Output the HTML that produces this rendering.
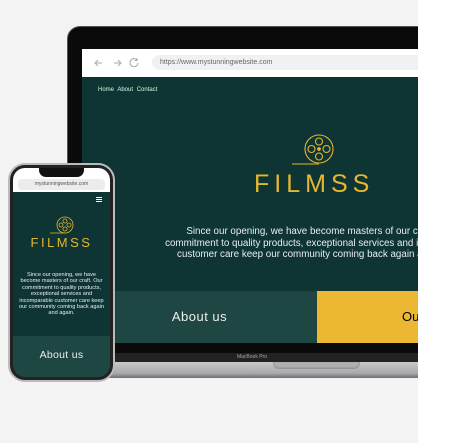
<!DOCTYPE html>
<html><head><style>
*{margin:0;padding:0;box-sizing:border-box}
body{width:463px;height:443px;overflow:hidden;position:relative;background:#fff;font-family:"Liberation Sans",sans-serif}
.bg{position:absolute;left:0;top:0;width:418px;height:443px;background:#f3f3f3;overflow:hidden}
.lap{position:absolute;left:67px;top:26px;width:380px;height:330px;background:#0a0a0a;border-radius:13px;border:1px solid #555}
.scr{position:absolute;left:82px;top:49px;width:340px;height:294px;background:#0e3534;overflow:hidden}
.bar{position:absolute;left:0;top:0;width:100%;height:28px;background:#fff}
.url{position:absolute;left:70px;top:6px;width:300px;height:15px;background:#f1f1f3;border-radius:8px;font-size:7px;color:#666;line-height:15px;padding-left:8px}
.nav{position:absolute;left:16px;top:38px;font-size:6px;color:#cfd;word-spacing:2px}
.title{position:absolute;left:172px;top:121px;font-size:25px;letter-spacing:5px;color:#e5b630;font-weight:300}
.txt{position:absolute;left:8px;top:177px;width:460px;text-align:center;font-size:9.8px;line-height:11.5px;color:#e8eeee}
.ab{position:absolute;left:0;top:242px;width:235px;height:52px;background:#1e4643;color:#eee;font-size:13px;text-align:center;line-height:52px;letter-spacing:.5px}
.yl{position:absolute;left:235px;top:242px;width:120px;height:52px;background:#ecb733;font-size:13px;line-height:52px;padding-left:85px}
.bot1{position:absolute;left:82px;top:353px;width:340px;height:9px;background:#222;color:#aaa;font-size:5px;text-align:center;line-height:9px}
.base{position:absolute;left:60px;top:362px;width:370px;height:16px;background:linear-gradient(#c9c9cc,#a9a9ad 70%,#6e6e72)}
.notch{position:absolute;left:273px;top:362px;width:87px;height:7px;background:#b0b0b3;border-radius:0 0 6px 6px;box-shadow:inset 0 -1px 2px #888}
.ph{position:absolute;left:8px;top:163px;width:107px;height:219px;background:#222;border-radius:17px;border:2px solid #bbb}
.ps{position:absolute;left:13px;top:168px;width:97px;height:209px;background:#0e3534;border-radius:12px;overflow:hidden}
.pst{position:absolute;left:0;top:0;width:100%;height:24px;background:#fff}
.pn{position:absolute;left:26px;top:-1px;width:45px;height:10px;background:#111;border-radius:0 0 7px 7px}
.pu{position:absolute;left:5px;top:11px;width:87px;height:11px;background:#ececee;border-radius:4px;font-size:5px;color:#555;text-align:center;line-height:11px}
.pt{position:absolute;left:0;top:67px;width:100%;text-align:center;font-size:13px;letter-spacing:2.5px;color:#e5b630}
.ptx{position:absolute;left:6px;top:104px;width:85px;text-align:center;font-size:5.6px;line-height:6.4px;color:#e8eeee}
.pab{position:absolute;left:0;top:168px;width:100%;height:41px;background:#1e4643;color:#eee;font-size:10.5px;text-align:center;line-height:38px;letter-spacing:.3px}
</style></head><body>
<div class="bg">
<div class="lap"></div>
<div class="scr">
<div class="bar">
<svg width="70" height="28" style="position:absolute;left:8px;top:0" fill="none" stroke="#aaa" stroke-width="1"><path d="M12 14h-7M8 11l-3 3 3 3"/><path d="M24 14h7M28 11l3 3-3 3"/><path d="M47 11a4 4 0 1 0 1 3M47 9v2.5h-2.5"/></svg>
<div class="url">https://www.mystunningwebsite.com</div></div>
<div class="nav">Home About Contact</div>
<svg width="120" height="50" style="position:absolute;left:205px;top:84px" fill="none" stroke="#e5b630" stroke-width="1.1"><circle cx="32" cy="16" r="14"/><circle cx="32" cy="8.5" r="3.5"/><circle cx="32" cy="23.5" r="3.5"/><circle cx="24.5" cy="16" r="3.5"/><circle cx="39.5" cy="16" r="3.5"/><circle cx="32" cy="16" r="1.3" fill="#e5b630"/><path d="M5 31h27"/></svg>
<div class="title">FILMSS</div>
<div class="txt">Since our opening, we have become masters of our craft. Our<br>commitment to quality products, exceptional services and incomparable<br>customer care keep our community coming back again and again.</div>
<div class="ab">About us</div>
<div class="yl">Our</div>
</div>
<div class="bot1">MacBook Pro</div>
<div class="base"></div>
<div class="notch"></div>
<div class="ph"></div>
<div class="ps">
<div class="pst"><div class="pn"></div><div class="pu">mystunningwebsite.com</div></div>
<div style="position:absolute;right:8px;top:29px;width:6px;height:5px;border-top:1px solid #fff;border-bottom:1px solid #fff"><div style="border-top:1px solid #fff;margin-top:1px"></div></div>
<svg width="40" height="28" style="position:absolute;left:36px;top:46px" fill="none" stroke="#e5b630" stroke-width=".8"><circle cx="16" cy="11" r="8"/><circle cx="16" cy="7" r="2"/><circle cx="16" cy="15" r="2"/><circle cx="12" cy="11" r="2"/><circle cx="20" cy="11" r="2"/><path d="M1 19h15"/></svg>
<div class="pt">FILMSS</div>
<div class="ptx">Since our opening, we have become masters of our craft. Our commitment to quality products, exceptional services and incomparable customer care keep our community coming back again and again.</div>
<div class="pab">About us</div>
</div>
</div>
</body></html>
